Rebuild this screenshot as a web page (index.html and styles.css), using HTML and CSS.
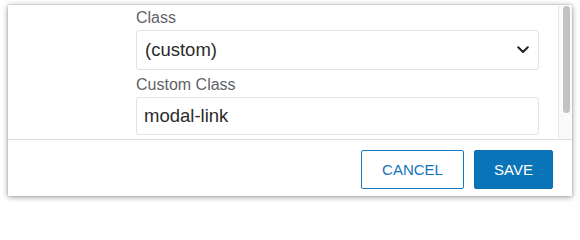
FILE: index.html
```html
<!DOCTYPE html>
<html lang="en">
<head>
<meta charset="utf-8">
<title>Link settings</title>
<link rel="stylesheet" href="styles.css">
</head>
<body>
<div class="dialog">
  <div class="dialog-body">
    <form class="form">
      <div class="field">
        <label class="field-label" for="cls">Class</label>
        <div class="select">
          <span class="select-value" id="cls">(custom)</span>
          <svg class="chevron" width="12" height="8" viewBox="0 0 12 8" aria-hidden="true">
            <path d="M1.2 1.3 6 6 10.8 1.3" fill="none" stroke="#1f2328" stroke-width="2" stroke-linecap="round" stroke-linejoin="round"/>
          </svg>
        </div>
      </div>
      <div class="field">
        <label class="field-label" for="custom">Custom Class</label>
        <div class="input" id="custom">modal-link</div>
      </div>
    </form>
    <div class="scrollbar" aria-hidden="true">
      <div class="scrollbar-thumb"></div>
    </div>
  </div>
  <div class="dialog-footer">
    <button class="btn btn-secondary" type="button">CANCEL</button>
    <button class="btn btn-primary" type="button">SAVE</button>
  </div>
</div>
</body>
</html>
```

FILE: styles.css
```css
html, body {
  margin: 0;
  padding: 0;
  background: #ffffff;
}

body {
  padding: 5px 8px 6px 8px;
  font-family: "Liberation Sans", Arial, Helvetica, sans-serif;
}

.dialog {
  width: 564px;
  height: 191px;
  background: #ffffff;
  box-shadow: 0 0 1px rgba(0, 0, 0, 0.35), 0 1px 6px rgba(0, 0, 0, 0.4);
  display: flex;
  flex-direction: column;
}

.dialog-body {
  height: 134px;
  flex: none;
  display: flex;
  overflow: hidden;
}

.form {
  flex: 1;
  padding: 3px 19px 0 128px;
  display: flex;
  flex-direction: column;
  gap: 5px;
  margin: 0;
  min-width: 0;
}

.scrollbar {
  width: 13px;
  flex: none;
  background: #fafafa;
  border-left: 1px solid #e8e8e8;
  padding: 1px 2px 0 4px;
  box-sizing: border-box;
  width: 14px;
}

.scrollbar-thumb {
  height: 107px;
  background: #c2c2c2;
  border-radius: 4px;
}

.field {
  display: flex;
  flex-direction: column;
  gap: 2px;
}

.field-label {
  font-size: 16px;
  line-height: 20px;
  color: #5f6368;
}

.select,
.input {
  box-sizing: border-box;
  border: 1px solid #e2e2e2;
  border-radius: 3px;
  font-size: 18.5px;
  color: #2b2b2b;
  display: flex;
  align-items: center;
  flex: none;
}

.select {
  height: 40px;
  padding: 0 9px 0 8px;
  justify-content: space-between;
}

.input {
  height: 38px;
  padding: 0 7px;
}

.chevron {
  display: block;
}

.dialog-footer {
  border-top: 1px solid #dcdcdc;
  padding: 10px 19px 7px 19px;
  display: flex;
  justify-content: flex-end;
  gap: 10px;
}

.btn {
  box-sizing: border-box;
  height: 39px;
  border-radius: 2px;
  font-family: "Liberation Sans", Arial, Helvetica, sans-serif;
  font-size: 15px;
  padding: 0;
  cursor: pointer;
}

.btn-secondary {
  width: 103px;
  background: #ffffff;
  border: 1px solid #1a7bc1;
  color: #1474bb;
}

.btn-primary {
  width: 79px;
  background: #0a74b8;
  border: 1px solid #0a6fb0;
  color: #ffffff;
}
```
